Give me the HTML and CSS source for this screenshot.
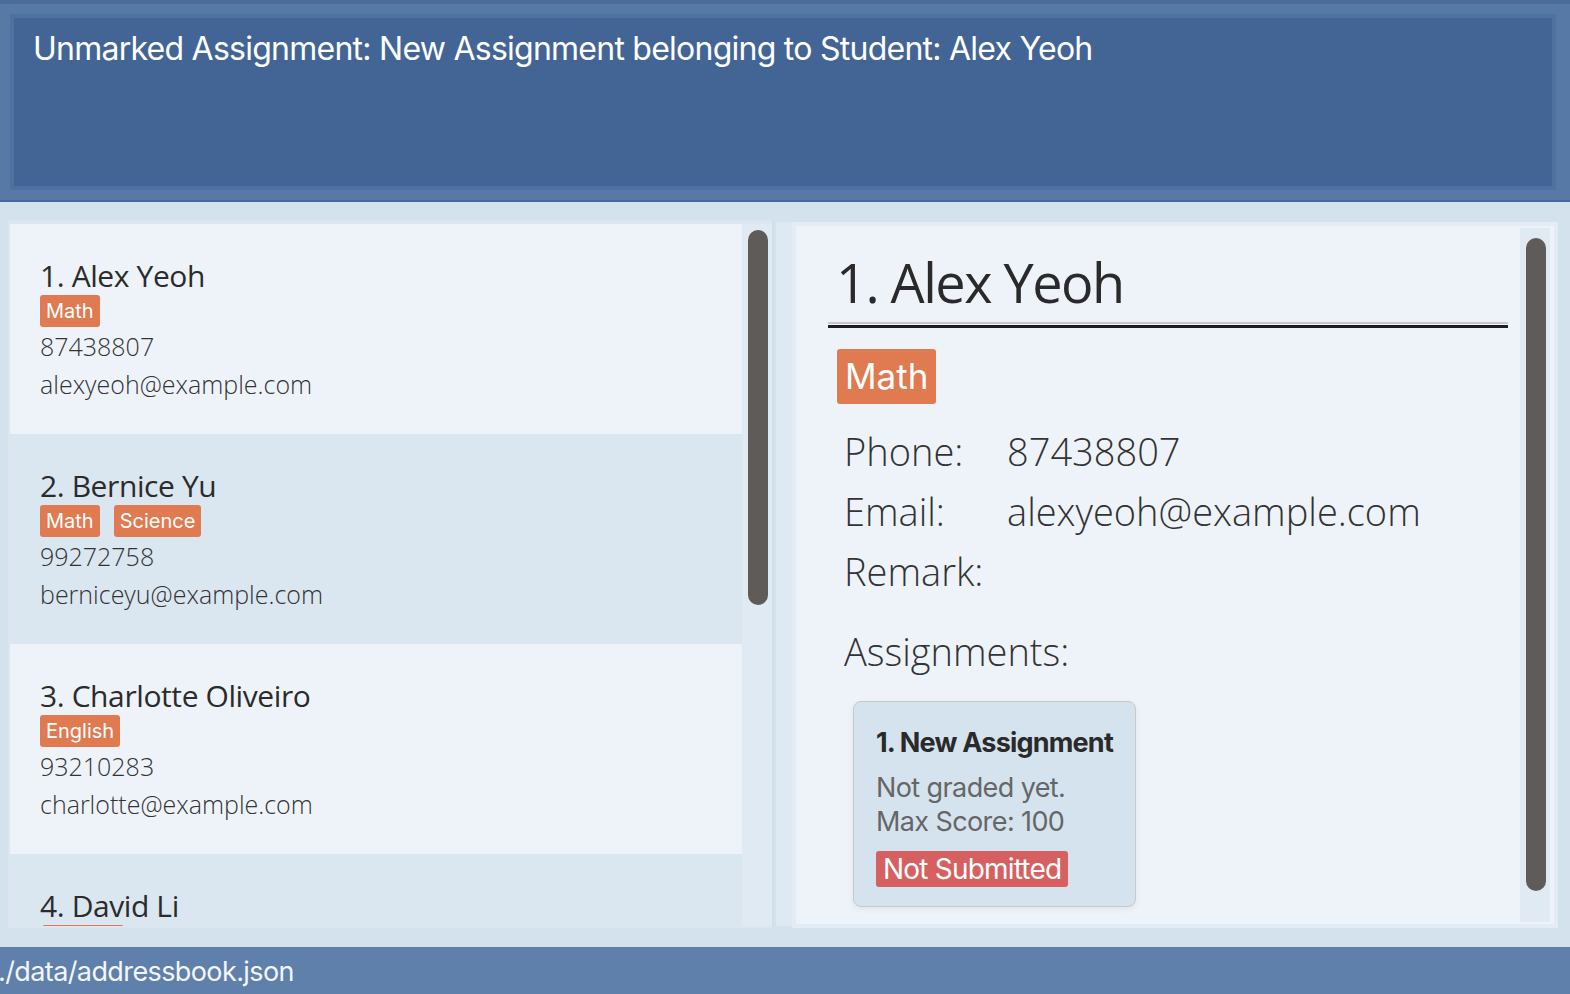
FILE: index.html
```html
<!DOCTYPE html>
<html>
<head>
<meta charset="utf-8">
<link rel="stylesheet" href="styles.css">
</head>
<body>
<div class="app">
  <header class="result-area">
    <div class="result-box">Unmarked Assignment: New Assignment belonging to Student: Alex Yeoh</div>
  </header>
  <main class="main">
    <section class="list-frame">
      <div class="cards">
        <div class="card odd">
          <div class="name">1. Alex Yeoh</div>
          <div class="tags"><span class="tag">Math</span></div>
          <div class="line">87438807</div>
          <div class="line">alexyeoh@example.com</div>
        </div>
        <div class="card even">
          <div class="name">2. Bernice Yu</div>
          <div class="tags"><span class="tag">Math</span><span class="tag">Science</span></div>
          <div class="line">99272758</div>
          <div class="line">berniceyu@example.com</div>
        </div>
        <div class="card odd">
          <div class="name">3. Charlotte Oliveiro</div>
          <div class="tags"><span class="tag">English</span></div>
          <div class="line">93210283</div>
          <div class="line">charlotte@example.com</div>
        </div>
        <div class="card even partial">
          <div class="name">4. David Li</div>
          <div class="tags"><span class="tag tag-stub"></span></div>
        </div>
      </div>
      <div class="track list-track"><div class="thumb list-thumb"></div></div>
    </section>
    <div class="divider"><div class="divider-col"></div></div>
    <section class="detail-frame">
      <div class="detail">
        <div class="detail-content">
          <div class="title">1. Alex Yeoh</div>
          <div class="rule"></div>
          <div class="detail-tags"><span class="big-tag">Math</span></div>
          <div class="row first-row"><span class="label">Phone:</span><span class="value">87438807</span></div>
          <div class="row"><span class="label">Email:</span><span class="value">alexyeoh@example.com</span></div>
          <div class="row"><span class="label">Remark:</span><span class="value"></span></div>
          <div class="row assignments-label"><span class="label">Assignments:</span></div>
          <div class="assignment">
            <div class="a-title">1. New Assignment</div>
            <div class="a-line">Not graded yet.</div>
            <div class="a-line">Max Score: 100</div>
            <span class="a-badge">Not Submitted</span>
          </div>
        </div>
        <div class="track detail-track"><div class="thumb detail-thumb"></div></div>
      </div>
    </section>
  </main>
  <footer class="status"><span class="status-text">./data/addressbook.json</span></footer>
</div>
</body>
</html>
```

FILE: styles.css
```css
html, body {
  margin: 0;
  padding: 0;
}
body {
  width: 1570px;
  height: 994px;
  overflow: hidden;
  background: #d4e2ed;
  font-family: "Open Sans", "Noto Sans", sans-serif;
}
.app {
  display: flex;
  flex-direction: column;
  height: 994px;
}
.result-area {
  background: #5679a5;
  border-top: 4px solid #4b6b98;
  border-bottom: 2px solid #46689a;
  padding: 10px 14px 10px 10px;
  height: 176px;
}
.result-box {
  height: 100%;
  box-sizing: border-box;
  background: #426596;
  border: 4px solid #4e72a0;
  color: #ffffff;
  font-family: "Inter", "Liberation Sans", sans-serif;
  font-size: 32px;
  letter-spacing: -0.75px;
  line-height: 40px;
  padding: 11px 19px;
}
.main {
  flex: 1;
  display: flex;
  padding: 18px 12px 19px 8px;
  min-height: 0;
}
.list-frame {
  width: 764px;
  display: flex;
  background: #dbe6f0;
  padding: 4px 0 2px 2px;
  box-sizing: border-box;
  overflow: hidden;
}
.cards {
  flex: 1;
  overflow: hidden;
}
.card {
  height: 210px;
  box-sizing: border-box;
  padding: 34px 30px 0 30px;
  color: #2b2b2b;
}
.card.odd { background: #eef3fa; }
.card.even { background: #dae6f0; }
.card.partial {
  height: 73px;
  overflow: hidden;
}
.name {
  font-size: 30px;
  line-height: 36px;
  letter-spacing: -0.4px;
  margin-bottom: 1px;
}
.tags {
  display: flex;
  gap: 14px;
}
.tag {
  background: #df7a51;
  color: #ffffff;
  font-family: "Inter", "Liberation Sans", sans-serif;
  font-size: 20px;
  line-height: 26px;
  padding: 3px 6px;
  border-radius: 3px;
}
.tag-stub {
  width: 70px;
  height: 26px;
  margin-left: 2px;
}
.line {
  font-size: 25px;
  font-weight: 300;
  line-height: 38px;
  color: #333333;
}
.track {
  background: #e0eaf3;
  box-sizing: border-box;
}
.list-track {
  width: 30px;
  padding: 6px 4px 0 6px;
}
.thumb {
  background: #5f5b58;
  border-radius: 10px;
}
.list-thumb {
  height: 375px;
}
.divider {
  width: 20px;
  display: flex;
  padding: 2px 0 0 2px;
  box-sizing: border-box;
  border-left: 2px solid #d0dfea;
  height: 706px;
}
.divider-col {
  width: 18px;
  background: #dfe9f2;
}
.detail-frame {
  width: 766px;
  background: #e3ecf5;
  padding: 4px;
  box-sizing: border-box;
  margin-top: 2px;
}
.detail {
  height: 100%;
  background: #eef3fa;
  display: flex;
}
.detail-content {
  flex: 1;
  padding: 24px 12px 0 32px;
  color: #2a2a2a;
}
.title {
  font-size: 54px;
  line-height: 64px;
  letter-spacing: -1.5px;
  padding-left: 8px;
  padding-bottom: 8px;
  border-bottom: 2px solid #c8c8c8;
}
.rule {
  height: 3px;
  background: #1e1e1e;
  margin-top: 1px;
}
.detail-tags {
  margin-top: 21px;
  padding-left: 9px;
  display: flex;
}
.big-tag {
  background: #df7a51;
  color: #ffffff;
  font-family: "Inter", "Liberation Sans", sans-serif;
  font-size: 35px;
  line-height: 43px;
  padding: 6px 8px;
  border-radius: 3px;
}
.row {
  display: flex;
  padding-left: 16px;
  font-size: 38px;
  font-weight: 300;
  line-height: 60px;
  color: #333333;
}
.first-row {
  margin-top: 17px;
}
.label {
  width: 163px;
}
.assignments-label {
  margin-top: 20px;
}
.assignment {
  margin: 20px 0 0 25px;
  width: 283px;
  height: 206px;
  box-sizing: border-box;
  background: #d5e3ee;
  border: 1.5px solid #c9c9c9;
  border-radius: 8px;
  box-shadow: 0 2px 6px rgba(0, 0, 0, 0.06);
  padding: 23px 10px 0 22px;
  font-family: "Inter", "Liberation Sans", sans-serif;
}
.a-title {
  font-size: 27px;
  font-weight: 700;
  letter-spacing: -0.8px;
  line-height: 36px;
  color: #2a2a2a;
  margin-bottom: 10px;
}
.a-line {
  font-size: 27px;
  line-height: 34px;
  color: #666666;
  letter-spacing: -0.6px;
}
.a-badge {
  display: inline-block;
  margin-top: 12px;
  background: #d65f60;
  color: #ffffff;
  font-size: 28px;
  line-height: 36px;
  padding: 0 7px;
  border-radius: 3px;
  letter-spacing: -0.8px;
}
.detail-track {
  width: 30px;
  margin: 2px 4px 2px 0;
  padding: 10px 4px 0 6px;
}
.detail-thumb {
  height: 653px;
}
.status {
  height: 45px;
  padding-top: 2px;
  background: #5f80ab;
  color: #f2f6fa;
  font-family: "Inter", "Liberation Sans", sans-serif;
  font-size: 27px;
  line-height: 45px;
  letter-spacing: -0.6px;
  overflow: hidden;
}
.status-text {
  display: inline-block;
  margin-left: -2px;
}
```
